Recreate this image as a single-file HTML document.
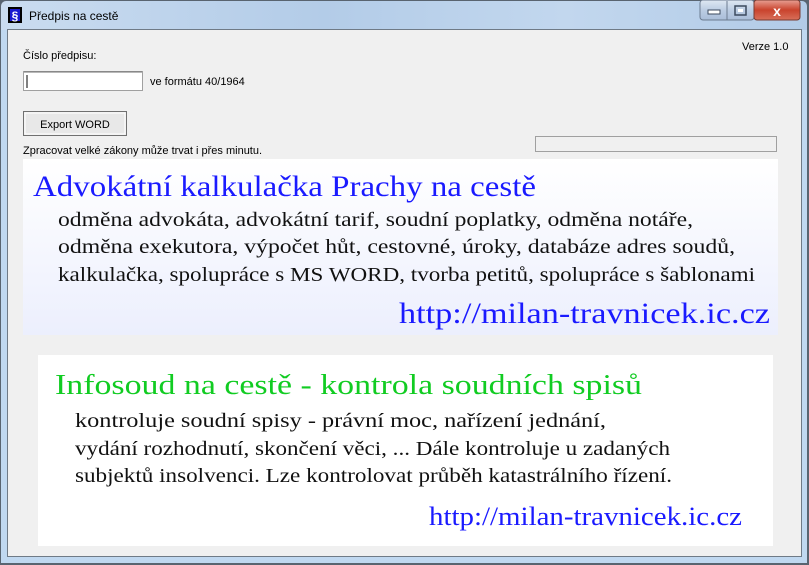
<!DOCTYPE html>
<html><head><meta charset="utf-8"><style>
html,body{margin:0;padding:0;width:809px;height:565px;overflow:hidden;background:#fff}
svg{display:block}
.ui{font-family:"Liberation Sans",sans-serif;font-size:11px;fill:#000}
.serif{font-family:"Liberation Serif",serif}
</style></head><body>
<svg width="809" height="565" viewBox="0 0 809 565" xmlns="http://www.w3.org/2000/svg">
<defs>
<linearGradient id="tb" x1="0" y1="0" x2="1" y2="0">
<stop offset="0" stop-color="#cadcf0"/><stop offset="0.4" stop-color="#b3cce8"/><stop offset="0.7" stop-color="#c2d7ee"/><stop offset="1" stop-color="#b2cbe7"/></linearGradient>
<linearGradient id="p1" x1="0" y1="0" x2="0" y2="1">
<stop offset="0" stop-color="#ffffff"/><stop offset="1" stop-color="#eceffd"/></linearGradient>
<linearGradient id="cl" x1="0" y1="0" x2="0" y2="1">
<stop offset="0" stop-color="#e8a093"/><stop offset="0.5" stop-color="#c9432d"/><stop offset="1" stop-color="#d8705a"/></linearGradient>
<linearGradient id="bt" x1="0" y1="0" x2="0" y2="1">
<stop offset="0" stop-color="#dfe8f3"/><stop offset="0.5" stop-color="#bccde3"/><stop offset="1" stop-color="#a9bdd8"/></linearGradient>
</defs>
<rect x="0" y="0" width="809" height="565" fill="#596470"/>
<rect x="1" y="1" width="806" height="562" rx="5" fill="url(#tb)"/>
<rect x="1" y="30" width="806" height="533" fill="#c0d8f0"/>
<rect x="7" y="29" width="795" height="528" fill="#6f7a86"/>
<rect x="8" y="30" width="793" height="526" fill="#f0f0f0"/>
<rect x="8" y="7" width="14" height="16" fill="#000"/>
<rect x="10" y="9" width="10" height="12" fill="#1a1ad0"/>
<text x="15" y="20" font-family="Liberation Sans,sans-serif" font-size="12" fill="#fff" text-anchor="middle" font-weight="bold">§</text>
<text x="29" y="20" font-family="Liberation Sans,sans-serif" font-size="12" fill="#000">Předpis na cestě</text>
<rect x="700" y="0" width="54" height="20" rx="3" fill="url(#bt)" stroke="#6c7b90"/>
<line x1="727" y1="1" x2="727" y2="20" stroke="#6c7b90"/>
<rect x="708" y="10" width="12" height="4" fill="#fff" stroke="#3c4a5e"/>
<rect x="735" y="6" width="11" height="9" fill="none" stroke="#3c4a5e" stroke-width="1.5"/>
<rect x="738" y="9" width="5" height="3" fill="#fff"/>
<rect x="754" y="0" width="46" height="20" rx="3" fill="url(#cl)" stroke="#7a3a30"/>
<text x="777" y="16" font-family="Liberation Sans,sans-serif" font-size="14" font-weight="bold" fill="#fff" text-anchor="middle">x</text>
<text class="ui" x="23" y="59">Číslo předpisu:</text>
<text class="ui" x="742" y="50">Verze 1.0</text>
<rect x="23.5" y="71.5" width="119" height="19" fill="#fff" stroke="#a0a0a0"/>
<line x1="24" y1="72" x2="142" y2="72" stroke="#707070"/>
<line x1="27" y1="75" x2="27" y2="88" stroke="#000"/>
<text class="ui" x="150" y="85">ve formátu 40/1964</text>
<rect x="23.5" y="111.5" width="103" height="24" fill="#e8e8e8" stroke="#707070"/>
<rect x="25" y="113" width="100" height="21" fill="none" stroke="#fff"/>
<text class="ui" x="75" y="128" text-anchor="middle">Export WORD</text>
<text class="ui" x="23" y="154">Zpracovat velké zákony může trvat i přes minutu.</text>
<rect x="535.5" y="136.5" width="241" height="15" fill="#f0f0f0" stroke="#a0a0a0"/>
<rect x="23" y="159" width="755" height="176" fill="url(#p1)"/>
<g class="serif">
<text x="33" y="196" font-size="30" fill="#1a1aff" textLength="503" lengthAdjust="spacingAndGlyphs">Advokátní kalkulačka Prachy na cestě</text>
<text x="58" y="226" font-size="20" fill="#111" textLength="635" lengthAdjust="spacingAndGlyphs">odměna advokáta, advokátní tarif, soudní poplatky, odměna notáře,</text>
<text x="58" y="253" font-size="20" fill="#111" textLength="677" lengthAdjust="spacingAndGlyphs">odměna exekutora, výpočet hůt, cestovné, úroky, databáze adres soudů,</text>
<text x="58" y="281" font-size="20" fill="#111" textLength="697" lengthAdjust="spacingAndGlyphs">kalkulačka, spolupráce s MS WORD, tvorba petitů, spolupráce s šablonami</text>
<text x="399" y="323" font-size="30" fill="#1a1aff" textLength="371" lengthAdjust="spacingAndGlyphs">http://milan-travnicek.ic.cz</text>
</g>
<rect x="38" y="355" width="735" height="191" fill="#fff"/>
<g class="serif">
<text x="55" y="394" font-size="28" fill="#11cc22" textLength="587" lengthAdjust="spacingAndGlyphs">Infosoud na cestě - kontrola soudních spisů</text>
<text x="75" y="427" font-size="20" fill="#111" textLength="531" lengthAdjust="spacingAndGlyphs">kontroluje soudní spisy - právní moc, nařízení jednání,</text>
<text x="75" y="455" font-size="20" fill="#111" textLength="595" lengthAdjust="spacingAndGlyphs">vydání rozhodnutí, skončení věci, ... Dále kontroluje u zadaných</text>
<text x="75" y="482" font-size="20" fill="#111" textLength="597" lengthAdjust="spacingAndGlyphs">subjektů insolvenci. Lze kontrolovat průběh katastrálního řízení.</text>
<text x="429" y="525" font-size="26" fill="#1a1aff" textLength="313" lengthAdjust="spacingAndGlyphs">http://milan-travnicek.ic.cz</text>
</g>
</svg>
</body></html>
